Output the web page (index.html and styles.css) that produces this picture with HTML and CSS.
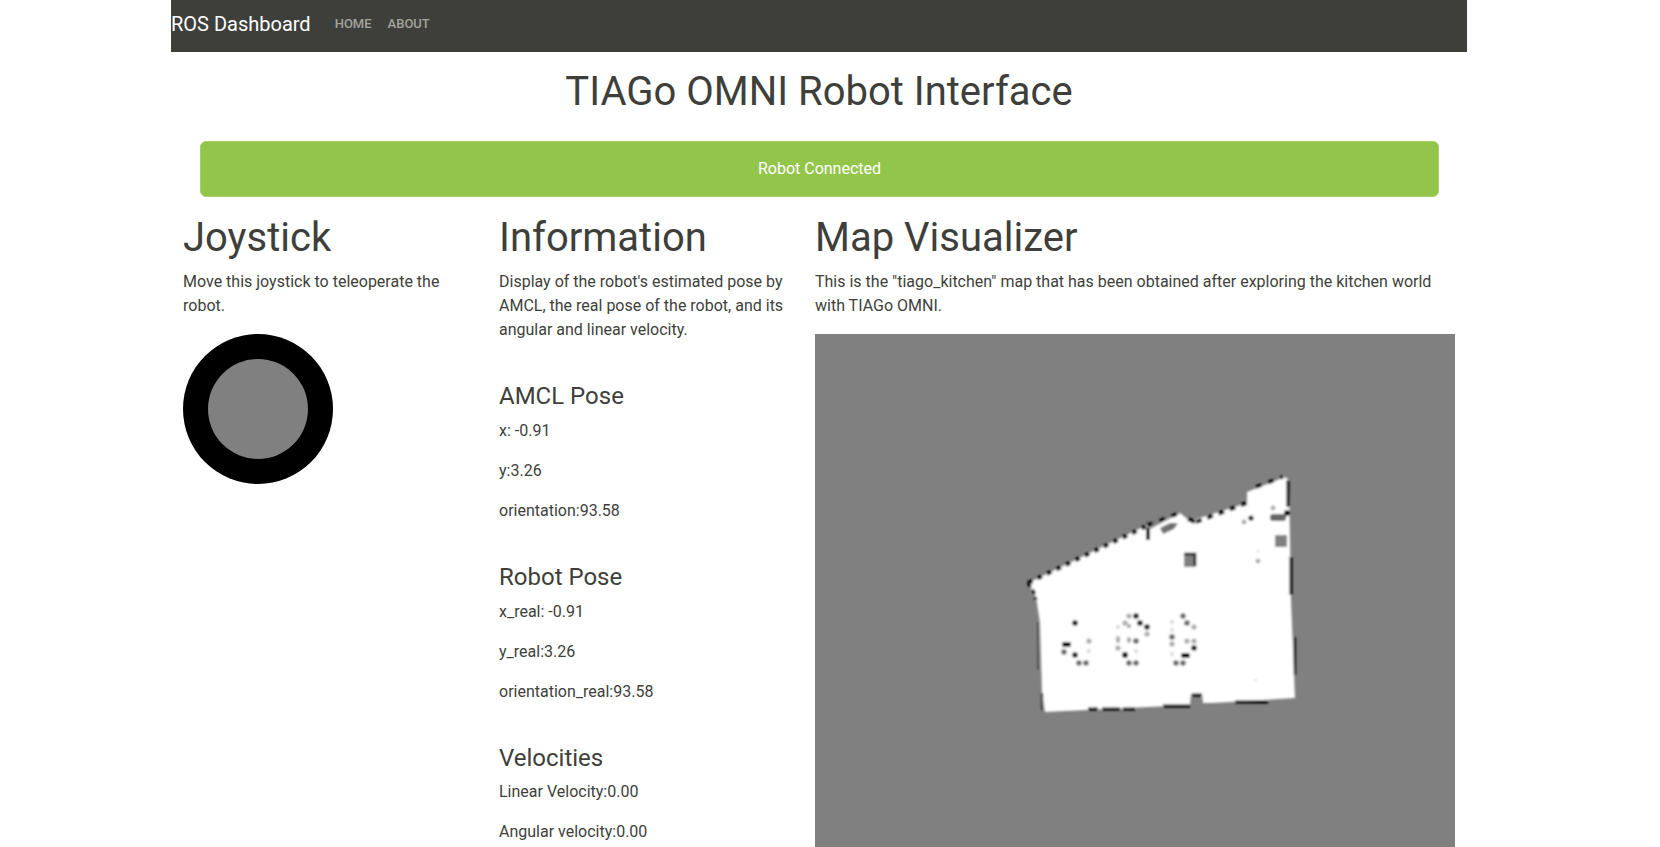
FILE: index.html
```html
<!DOCTYPE html>
<html lang="en">
<head>
<meta charset="utf-8">
<title>ROS Dashboard</title>
<link rel="stylesheet" href="styles.css">
</head>
<body>
<div class="container">
  <nav class="navbar">
    <a class="brand" href="#">ROS Dashboard</a>
    <ul class="nav-links">
      <li><a href="#">Home</a></li>
      <li><a href="#">About</a></li>
    </ul>
  </nav>
  <main>
    <h1 class="page-title">TIAGo OMNI Robot Interface</h1>
    <div class="alert">Robot Connected</div>
    <div class="columns">
      <section class="col">
        <h2>Joystick</h2>
        <p>Move this joystick to teleoperate the robot.</p>
        <div class="joystick"><div class="joystick-knob"></div></div>
      </section>
      <section class="col">
        <h2>Information</h2>
        <p>Display of the robot's estimated pose by AMCL, the real pose of the robot, and its angular and linear velocity.</p>
        <h3>AMCL Pose</h3>
        <p>x: -0.91</p>
        <p>y:3.26</p>
        <p>orientation:93.58</p>
        <h3>Robot Pose</h3>
        <p>x_real: -0.91</p>
        <p>y_real:3.26</p>
        <p>orientation_real:93.58</p>
        <h3>Velocities</h3>
        <p>Linear Velocity:0.00</p>
        <p>Angular velocity:0.00</p>
      </section>
      <section class="col">
        <h2>Map Visualizer</h2>
        <p>This is the "tiago_kitchen" map that has been obtained after exploring the kitchen world with TIAGo OMNI.</p>
        <svg class="map" viewBox="815 334 640 640" width="640" height="640" role="img" aria-label="Occupancy map">
          <defs>
            <filter id="soft" x="-5%" y="-5%" width="110%" height="110%"><feGaussianBlur stdDeviation="1.1"/></filter>
          </defs>
          <rect x="815" y="334" width="640" height="640" fill="#808080"/>
          <g filter="url(#soft)">
            <polygon fill="#fff" points="1028,583 1147,525 1148,530 1180,513 1190,521 1247,503 1247,492 1285,477 1289,480 1291,600 1295,698 1213,703 1203,703 1202,694 1191,694 1190,705 1045,712 1042,693 1040,623 1036,597"/>
            <polygon fill="#707070" points="1160,528 1170,523 1178,523 1174,529 1163,534"/>
            <polygon fill="#808080" points="1148,522 1160,518 1170,516 1162,521 1152,526"/>
            <g fill="none" stroke="#000">
              <path stroke-width="4" stroke-dasharray="5 5.5" d="M1028,583 L1147,526"/>
              <path stroke-width="3.5" stroke-dasharray="6 7" d="M1147,525 L1180,513"/>
              <path stroke-width="4" d="M1188,519 L1195,522"/>
              <path stroke-width="4" stroke-dasharray="6 6" d="M1196,522 L1247,503"/>
              <path stroke-width="3.5" stroke-dasharray="6 7" d="M1256,487 L1283,477"/>
              <path stroke-width="3" d="M1288,480 V507"/>
              <path stroke-width="3" d="M1291,557 V595"/>
              <path stroke-width="2.5" stroke="#222" d="M1295,637 V675"/>
              <path stroke-width="3" stroke-dasharray="5 3" d="M1028,583 L1034,592 L1036,600"/>
              <path stroke-width="2" stroke="#555" d="M1038,622 V670"/>
              <path stroke-width="2.5" stroke="#444" d="M1042,693 V710"/>
              <path stroke-width="3" d="M1088,709 H1098 M1102,709 H1120 M1123,709 H1135 M1163,706 H1190 M1192,695 H1202 M1235,702 H1268"/>
              <path stroke-width="4" d="M1148,528 V540"/>
            </g>
            <rect x="1270" y="514" width="16" height="7" rx="3" fill="#666"/>
            <circle cx="1287" cy="513" r="3" fill="#111"/>
            <rect x="1275" y="535" width="12" height="12" fill="#808080"/>
            <rect x="1184" y="553" width="12" height="14" fill="#808080"/>
            <path d="M1184,554 H1195 V566" fill="none" stroke="#000" stroke-width="2.5"/>
            <g fill="#111">
              <circle cx="1251" cy="518" r="2.6"/>
              <circle cx="1075" cy="623" r="2.8"/>
              <rect x="1062" y="642" width="9" height="5" rx="2"/>
              <circle cx="1075" cy="655" r="2.8"/>
              <circle cx="1136" cy="616" r="2.8"/>
              <circle cx="1140" cy="623" r="2.8"/>
              <circle cx="1147" cy="627" r="2.8"/>
              <circle cx="1125" cy="655" r="3"/>
              <circle cx="1194" cy="648" r="2.8"/>
              <rect x="1181" y="653" width="9" height="5" rx="2"/>
            </g>
            <g fill="#666">
              <circle cx="1064" cy="652" r="2.8"/>
              <circle cx="1079" cy="663" r="2.8"/>
              <circle cx="1086" cy="663" r="2.8"/>
              <circle cx="1136" cy="641" r="2.8"/>
              <circle cx="1129" cy="663" r="2.8"/>
              <circle cx="1136" cy="663" r="2.8"/>
              <circle cx="1183" cy="616" r="2.8"/>
              <circle cx="1187" cy="623" r="2.8"/>
              <circle cx="1172" cy="637" r="2.8"/>
              <circle cx="1176" cy="663" r="2.8"/>
              <circle cx="1183" cy="663" r="2.8"/>
            </g>
            <g fill="#aaa">
              <circle cx="1244" cy="522" r="2.4"/>
              <circle cx="1273" cy="508" r="2.4"/>
              <circle cx="1258" cy="561" r="2.4"/>
              <circle cx="1089" cy="641" r="2.6"/>
              <circle cx="1129" cy="616" r="2.6"/>
              <circle cx="1125" cy="623" r="2.6"/>
              <circle cx="1129" cy="626" r="2.2"/>
              <circle cx="1147" cy="634" r="2.6"/>
              <rect x="1116" y="636" width="4" height="7" rx="2"/>
              <rect x="1127" y="637" width="4" height="6" rx="2"/>
              <circle cx="1118" cy="648" r="2.6"/>
              <circle cx="1194" cy="627" r="2.6"/>
              <circle cx="1172" cy="644" r="2.6"/>
              <circle cx="1187" cy="641" r="2.6"/>
              <circle cx="1194" cy="641" r="2.6"/>
            </g>
            <g fill="#dedede">
              <circle cx="1118" cy="627" r="2.2"/>
              <circle cx="1136" cy="651" r="2.2"/>
              <circle cx="1089" cy="651" r="2.2"/>
              <circle cx="1172" cy="622" r="2.2"/>
              <circle cx="1172" cy="630" r="2.2"/>
              <circle cx="1172" cy="654" r="2.2"/>
              <circle cx="1255" cy="680" r="1.6"/>
              <circle cx="1258" cy="551" r="1.6"/>
            </g>
          </g>
        </svg>
      </section>
    </div>
  </main>
</div>
</body>
</html>
```

FILE: styles.css
```css
* {
  box-sizing: border-box;
}

body {
  margin: 0;
  padding-right: 22px;
  background: #fff;
  color: #3e3f3a;
  font-family: Roboto, "Liberation Sans", sans-serif;
  font-size: 16px;
  line-height: 24px;
}

.container {
  width: 1296px;
  margin: 0 auto;
}

.navbar {
  display: flex;
  align-items: center;
  height: 52px;
  background: #3e3f3a;
  padding-bottom: 5px;
}

.brand {
  color: #fff;
  font-size: 20px;
  text-decoration: none;
  margin-right: 16px;
}

.nav-links {
  display: flex;
  list-style: none;
  margin: 0;
  padding: 0;
}

.nav-links a {
  display: block;
  padding: 0 8px;
  color: #a3a39e;
  font-size: 13px;
  font-weight: 500;
  text-decoration: none;
  text-transform: uppercase;
}

.page-title {
  margin: 16px 0 25px;
  font-size: 40px;
  font-weight: 400;
  line-height: 48px;
  text-align: center;
}

.alert {
  margin: 0 28px 17px 29px;
  padding: 15px;
  background: #93c54b;
  border: 1px solid #a6d06c;
  border-radius: 6px;
  color: #fff;
  text-align: center;
}

.columns {
  display: grid;
  grid-template-columns: 316px 316px 664px;
}

.col {
  padding: 0 12px;
}

h2 {
  margin: 0 0 8px;
  font-size: 40px;
  font-weight: 400;
  line-height: 48px;
}

h3 {
  margin: 40px 0 8px;
  font-size: 24px;
  font-weight: 400;
  line-height: 28.8px;
}

p {
  margin: 0 0 16px;
}

.joystick {
  display: flex;
  align-items: center;
  justify-content: center;
  width: 150px;
  height: 150px;
  border-radius: 50%;
  background: #000;
}

.joystick-knob {
  width: 100px;
  height: 100px;
  border-radius: 50%;
  background: #808080;
}

.map {
  display: block;
}
```
